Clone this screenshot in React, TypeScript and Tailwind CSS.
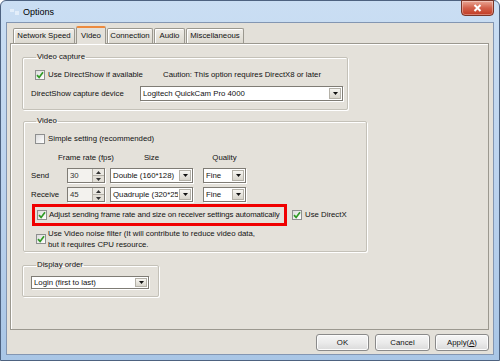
import React from "react";

const tabs = [
    { label: "Network Speed", w: "w-[62px]" },
    { label: "Video", w: "w-[30px]", active: true },
    { label: "Connection", w: "w-[46px]" },
    { label: "Audio", w: "w-[31px]" },
    { label: "Miscellaneous", w: "w-[58px]" },
];

function CheckBox({ checked }: { checked?: boolean }) {
    return (
        <span className="w-[10px] h-[10px] shrink-0 border border-[#8e8f8f] bg-gradient-to-br from-[#dcdcdc] to-white flex items-center justify-center">
            {checked && (
                <svg width="8" height="8" viewBox="0 0 8 8">
                    <path d="M1 4.2 L3.1 6.4 L7 1.3" stroke="#2f9a25" strokeWidth="1.7" fill="none" />
                </svg>
            )}
        </span>
    );
}

function DropButton() {
    return (
        <span className="w-[12px] m-[1px] shrink-0 border border-[#b4b1a8] bg-gradient-to-b from-[#f7f6f2] to-[#d8d5cc] flex items-center justify-center">
            <svg width="5" height="3" viewBox="0 0 5 3">
                <path d="M0 0h5L2.5 3z" fill="#111" />
            </svg>
        </span>
    );
}

function Select({ text, className }: { text: string; className: string }) {
    return (
        <div className={`flex bg-white border border-[#7f7c75] shadow-[1px_1px_0_#fff] ${className}`}>
            <span className="flex-1 min-w-0 flex items-center pl-[2px] whitespace-nowrap overflow-hidden">{text}</span>
            <DropButton />
        </div>
    );
}

function Spin({ value }: { value: string }) {
    return (
        <div className="w-[38px] h-[15px] flex bg-[#f3f2ee] border border-[#7f7c75] shadow-[1px_1px_0_#fff]">
            <span className="flex-1 flex items-center pl-[2px] text-[#333]">{value}</span>
            <div className="w-[12px] flex flex-col border-l border-[#b4b1a8]">
                <span className="flex-1 flex items-center justify-center bg-[#ebe9e3] border-b border-[#b4b1a8]">
                    <svg width="5" height="3" viewBox="0 0 5 3">
                        <path d="M0 3h5L2.5 0z" fill="#333" />
                    </svg>
                </span>
                <span className="flex-1 flex items-center justify-center bg-[#e2dfd7]">
                    <svg width="5" height="3" viewBox="0 0 5 3">
                        <path d="M0 0h5L2.5 3z" fill="#333" />
                    </svg>
                </span>
            </div>
        </div>
    );
}

function Button({ children, className }: { children: React.ReactNode; className: string }) {
    return (
        <div className={`h-[17px] flex items-center justify-center rounded-[3px] border border-[#8a8a8a] bg-gradient-to-b from-[#f6f6f6] via-[#ebebeb] to-[#dadada] shadow-[inset_0_0_0_1px_#fcfcfc] ${className}`}>
            {children}
        </div>
    );
}

const fieldset = "border border-[#c4c1b8] rounded-[2px] shadow-[inset_1px_1px_0_#fff,1px_1px_0_#fff]";

export default function App() {
    return (
        <div className="w-[500px] h-[361px] flex flex-col rounded-t-[6px] border border-[#4d6280] bg-gradient-to-b from-[#cadef3] via-[#bcd3ee] to-[#a9c6e6] font-['Liberation_Sans',Arial,sans-serif] text-[7.8px] leading-[10px] text-[#111]">
            {/* title bar */}
            <div className="h-[21px] shrink-0 flex items-start">
                <svg className="ml-[8px] mt-[7px]" width="11" height="8" viewBox="0 0 11 8">
                    <path d="M1 1h4v3H1zM6 3h4v4H6z" fill="#eef5fc" opacity="0.7" />
                </svg>
                <span className="ml-[3px] mt-[6px] text-[9px] text-black">Options</span>
                <div className="ml-auto mr-[5px] -mt-px w-[33px] h-[16px] rounded-b-[4px] border border-[#7a3526] bg-gradient-to-b from-[#e9a593] via-[#d2604a] to-[#c13a22] flex items-center justify-center shadow-[inset_0_0_0_1px_rgba(255,255,255,0.35)]">
                    <svg width="9" height="8" viewBox="0 0 9 8">
                        <path d="M1.5 1 L7.5 7 M7.5 1 L1.5 7" stroke="#fff" strokeWidth="2" />
                    </svg>
                </div>
            </div>

            {/* client */}
            <div className="flex-1 mx-[5px] mb-[5px] border border-[#8396b2] bg-[#e3e0d9] flex flex-col">
                <div className="relative z-10 h-[21px] flex items-end pl-[6px] gap-[1px]">
                    {tabs.map((t) =>
                        t.active ? (
                            <div
                                key={t.label}
                                className={`${t.w} h-[18px] flex items-center justify-center bg-[#e4e1da] border border-b-0 border-[#9b988f] border-t-[2px] border-t-[#ec8a3e] rounded-t-[2px]`}
                            >
                                {t.label}
                            </div>
                        ) : (
                            <div
                                key={t.label}
                                className={`${t.w} h-[15px] mb-px flex items-center justify-center bg-gradient-to-b from-[#efede8] to-[#dcd9d0] border border-b-0 border-[#9b988f] rounded-t-[2px] shadow-[inset_1px_1px_0_#fff]`}
                            >
                                {t.label}
                            </div>
                        )
                    )}
                </div>

                <div className="h-[287px] -mt-px ml-[3px] mr-[4px] border border-[#9b988f] bg-[#e4e1da] shadow-[inset_1px_1px_0_#fff] pl-[11px] pt-[8px] flex flex-col items-start">
                    {/* Video capture */}
                    <fieldset className={`w-[326px] pl-[8px] pb-[8px] ${fieldset}`}>
                        <legend className="ml-[5px] px-[1px]">Video capture</legend>
                        <div className="flex items-center h-[12px] mt-[7px] ml-[4px]">
                            <label className="w-[128px] flex items-center gap-[3px]">
                                <CheckBox checked />
                                Use DirectShow if available
                            </label>
                            <span>Caution: This option requires DirectX8 or later</span>
                        </div>
                        <div className="flex items-center mt-[5px]">
                            <span className="w-[109px]">DirectShow capture device</span>
                            <Select className="w-[203px] h-[15px]" text="Logitech QuickCam Pro 4000" />
                        </div>
                    </fieldset>

                    {/* Video */}
                    <fieldset className={`w-[344px] ml-px mt-[6px] pl-[7px] pb-[1px] ${fieldset}`}>
                        <legend className="ml-[5px] px-[1px]">Video</legend>
                        <label className="flex items-center gap-[3px] h-[12px] mt-[7px] ml-[4px]">
                            <CheckBox />
                            Simple setting (recommended)
                        </label>
                        <div className="flex items-center h-[10px] mt-[8px] whitespace-nowrap">
                            <span className="w-[36px]" />
                            <span className="w-[38px] flex justify-center">Frame rate (fps)</span>
                            <span className="w-[83px] ml-[5px] flex justify-center">Size</span>
                            <span className="w-[43px] ml-[10px] flex justify-center">Quality</span>
                        </div>
                        <div className="flex items-center mt-[5px]">
                            <span className="w-[36px]">Send</span>
                            <Spin value="30" />
                            <Select className="w-[83px] h-[15px] ml-[5px]" text="Double (160*128)" />
                            <Select className="w-[43px] h-[15px] ml-[10px]" text="Fine" />
                        </div>
                        <div className="flex items-center mt-[4px]">
                            <span className="w-[36px]">Receive</span>
                            <Spin value="45" />
                            <Select className="w-[83px] h-[15px] ml-[5px]" text="Quadruple (320*256" />
                            <Select className="w-[43px] h-[15px] ml-[10px]" text="Fine" />
                        </div>
                        <div className="flex items-center mt-[2px] ml-px">
                            <div className="w-[255px] h-[22px] border-[3px] border-[#f00000] flex items-center pl-[2px] gap-[2px] whitespace-nowrap tracking-[-0.1px]">
                                <CheckBox checked />
                                Adjust sending frame rate and size on receiver settings automatically
                            </div>
                            <label className="ml-[5px] flex items-center gap-[3px]">
                                <CheckBox checked />
                                Use DirectX
                            </label>
                        </div>
                        <div className="flex items-center gap-[2px] mt-[2px] ml-[5px]">
                            <CheckBox checked />
                            <span className="leading-[11px]">
                                Use Video noise filter (It will contribute to reduce video data,
                                <br />
                                but it requires CPU resource.
                            </span>
                        </div>
                    </fieldset>

                    {/* Display order */}
                    <fieldset className={`w-[137px] mt-[8px] pl-[8px] pb-[7px] ${fieldset}`}>
                        <legend className="ml-[5px] px-[1px]">Display order</legend>
                        <Select className="w-[118px] h-[13px] mt-[6px]" text="Login (first to last)" />
                    </fieldset>
                </div>

                <div className="flex justify-end mt-[4px] mr-[4px]">
                    <Button className="w-[53px]">OK</Button>
                    <Button className="w-[55px] ml-[6px]">Cancel</Button>
                    <Button className="w-[54px] ml-[5px]">
                        <span>
                            Apply(<span className="underline">A</span>)
                        </span>
                    </Button>
                </div>
            </div>
        </div>
    );
}
